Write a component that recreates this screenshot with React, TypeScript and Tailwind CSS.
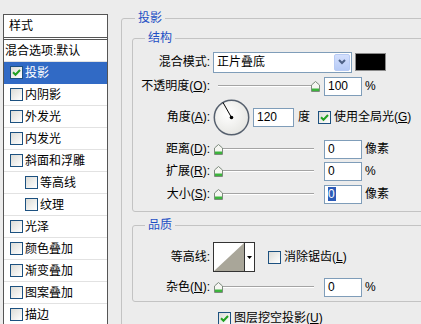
import React from "react";

const font = "font-['Liberation_Sans','Noto_Sans_CJK_SC',sans-serif]";

type Style = { label: string; checked?: boolean; selected?: boolean; indent?: boolean };

const styles: Style[] = [
  { label: "投影", checked: true, selected: true },
  { label: "内阴影" },
  { label: "外发光" },
  { label: "内发光" },
  { label: "斜面和浮雕" },
  { label: "等高线", indent: true },
  { label: "纹理", indent: true },
  { label: "光泽" },
  { label: "颜色叠加" },
  { label: "渐变叠加" },
  { label: "图案叠加" },
  { label: "描边" },
];

function Check({ checked = false }: { checked?: boolean }) {
  return (
    <span className="flex h-[13px] w-[13px] shrink-0 items-center justify-center border border-[#1c5180] bg-linear-to-br from-[#dcdcd7] to-white">
      {checked && (
        <svg width="9" height="9" viewBox="0 0 9 9">
          <path d="M1 4.2 L3.5 6.7 L8 2" fill="none" stroke="#21a121" strokeWidth="2" />
        </svg>
      )}
    </span>
  );
}

function Thumb() {
  return (
    <svg width="9" height="11" viewBox="0 0 9 11">
      <path d="M0.5 4 L4.5 0.5 L8.5 4 V10.5 H0.5 Z" fill="#f6f6f2" stroke="#7c8a7c" />
      <rect x="1" y="7.5" width="7" height="2.5" fill="#3cb43c" />
    </svg>
  );
}

function Slider({ atEnd = false }: { atEnd?: boolean }) {
  return (
    <div className="relative ml-[4px] h-[11px] w-[107px] shrink-0">
      <div className="absolute left-[4px] right-[7px] top-[4px] h-[2px] border-t border-b border-t-[#a4a4a4] border-b-white" />
      <div className={`absolute top-0 ${atEnd ? "right-[1px]" : "left-0"}`}>
        <Thumb />
      </div>
    </div>
  );
}

function Field({ children, w = "w-[38px]" }: { children: React.ReactNode; w?: string }) {
  return (
    <div className={`${w} ml-[3px] flex h-[19px] shrink-0 items-center border border-[#7f9db9] bg-white pl-[3px]`}>
      {children}
    </div>
  );
}

function Row({ label, h = "h-[22px]", mt = "", children }: { label: React.ReactNode; h?: string; mt?: string; children: React.ReactNode }) {
  return (
    <div className={`flex items-center ${h} ${mt}`}>
      <div className="w-[77px] shrink-0 text-right">{label}</div>
      {children}
    </div>
  );
}

export default function App() {
  return (
    <div className={`${font} flex h-[324px] w-[421px] overflow-hidden bg-[#ececec] text-[12px] leading-[14px] text-black`}>
      {/* style list */}
      <div className="ml-[3px] mt-[14px] h-[320px] w-[105px] shrink-0 border border-[#555] bg-white">
        <div className="flex h-[25px] items-center border-b-[3px] border-double border-[#555] pl-[5px]">样式</div>
        <div className="flex h-[22px] items-center border-b border-[#e2e2e2] pl-[1px]">混合选项:默认</div>
        {styles.map((s) => (
          <div
            key={s.label}
            className={`flex h-[22px] items-center gap-[2px] border-b ${s.indent ? "pl-[21px]" : "pl-[6px]"} ${
              s.selected ? "border-[#316ac5] bg-[#316ac5] text-white" : "border-[#e2e2e2]"
            }`}
          >
            <Check checked={s.checked} />
            <span>{s.label}</span>
          </div>
        ))}
      </div>

      {/* drop shadow settings */}
      <fieldset className="ml-[13px] mt-[11px] h-[330px] w-[320px] shrink-0 rounded-[3px] border border-[#c3c3c3] pl-[10px]">
        <legend className="ml-[3px] px-[3px] leading-[14px] text-[#1d4fc4]">投影</legend>

        <fieldset className="mt-[6px] w-[300px] rounded-[3px] border border-[#c3c3c3] pb-[6px] pt-[6px]">
          <legend className="ml-[12px] px-[3px] leading-[14px] text-[#1d4fc4]">结构</legend>

          <Row label="混合模式:">
            <div className="ml-[3px] flex h-[21px] w-[139px] shrink-0 items-center border border-[#7f9db9] bg-white">
              <span className="flex-1 pl-[3px]">正片叠底</span>
              <span className="mr-[1px] flex h-[17px] w-[16px] items-center justify-center rounded-[2px] border border-[#b8cbf4] bg-linear-to-b from-[#d4e0fd] to-[#b6caf6]">
                <svg width="8" height="6" viewBox="0 0 8 6">
                  <path d="M1 1 L4 4 L7 1" fill="none" stroke="#4d6185" strokeWidth="2" />
                </svg>
              </span>
            </div>
            <div className="ml-[3px] h-[18px] w-[31px] shrink-0 border border-[#8a8a8a] bg-black" />
          </Row>

          <Row label={<>不透明度(<u>O</u>):</>} mt="mt-[2px]">
            <Slider atEnd />
            <Field>100</Field>
            <span className="ml-[3px]">%</span>
          </Row>

          <Row label={<>角度(<u>A</u>):</>} h="h-[38px]" mt="mt-[1px]">
            <svg width="37" height="37" viewBox="0 0 37 37" className="ml-[3px] shrink-0">
              <defs>
                <radialGradient id="dial" cx="0.4" cy="0.4" r="0.7">
                  <stop offset="0" stopColor="#ffffff" />
                  <stop offset="1" stopColor="#e4e4e0" />
                </radialGradient>
              </defs>
              <circle cx="18.5" cy="18.5" r="17.2" fill="url(#dial)" stroke="#56606e" strokeWidth="1.5" />
              <line x1="18.5" y1="18.5" x2="10" y2="3.5" stroke="#000" strokeWidth="1" />
              <circle cx="18.5" cy="18.5" r="1.8" fill="#000" />
            </svg>
            <Field w="w-[41px]">120</Field>
            <span className="ml-[4px]">度</span>
            <span className="ml-[8px]">
              <Check checked />
            </span>
            <span className="ml-[3px]">
              使用全局光(<u>G</u>)
            </span>
          </Row>

          <Row label={<>距离(<u>D</u>):</>} mt="mt-[2px]">
            <Slider />
            <Field>0</Field>
            <span className="ml-[3px]">像素</span>
          </Row>

          <Row label={<>扩展(<u>R</u>):</>}>
            <Slider />
            <Field>0</Field>
            <span className="ml-[3px]">%</span>
          </Row>

          <Row label={<>大小(<u>S</u>):</>} mt="mt-[1px]">
            <Slider />
            <Field>
              <span className="bg-[#2c5bb8] pr-[1px] text-white">0</span>
            </Field>
            <span className="ml-[3px]">像素</span>
          </Row>
        </fieldset>

        <fieldset className="mt-[6px] w-[300px] rounded-[3px] border border-[#c3c3c3] pb-[4px] pt-[10px]">
          <legend className="ml-[12px] px-[3px] leading-[14px] text-[#1d4fc4]">品质</legend>

          <Row label="等高线:" h="h-[30px]">
            <div className="ml-[3px] flex h-[30px] w-[42px] shrink-0 border border-[#333] bg-white">
              <svg width="30" height="28" viewBox="0 0 30 28" className="shrink-0">
                <polygon points="0,28 30,0 30,28" fill="#a9a699" />
              </svg>
              <div className="flex flex-1 items-center justify-center border-l border-[#333]">
                <svg width="5" height="3" viewBox="0 0 5 3">
                  <polygon points="0,0 5,0 2.5,3" fill="#000" />
                </svg>
              </div>
            </div>
            <span className="ml-[13px]">
              <Check />
            </span>
            <span className="ml-[3px]">
              消除锯齿(<u>L</u>)
            </span>
          </Row>

          <Row label={<>杂色(<u>N</u>):</>} h="h-[20px]" mt="mt-[5px]">
            <Slider />
            <Field>0</Field>
            <span className="ml-[3px]">%</span>
          </Row>
        </fieldset>

        <div className="ml-[86px] mt-[7px] flex h-[18px] items-center">
          <Check checked />
          <span className="ml-[3px]">
            图层挖空投影(<u>U</u>)
          </span>
        </div>
      </fieldset>
    </div>
  );
}
